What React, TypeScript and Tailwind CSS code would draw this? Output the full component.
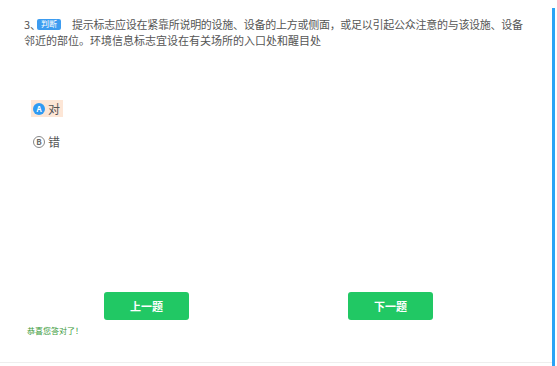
export default function App() {
  const font = { fontFamily: '"Noto Sans CJK SC", "Liberation Sans", sans-serif' };
  return (
    <div className="relative w-[557px] h-[366px] bg-white overflow-hidden" style={font}>
      {/* right scroll indicator */}
      <div className="absolute right-[2px] top-[8px] bottom-0 w-[3px] bg-[#2aa3f5]" />
      <div className="flex flex-col w-[552px] h-[363px] border-b border-[#eeeeee]">
        {/* question */}
        <div className="pl-[24px] pt-[16px] text-[11px] leading-[16px] text-[#555] whitespace-nowrap">
          <div className="flex items-center">
            <span>3、</span>
            <span className="flex items-center ml-[-4px] px-[4px] h-[11px] text-[8px] leading-none text-white bg-[#3d9cf0] rounded-[2px]">判断</span>
            <span className="ml-[11px] tracking-[-0.27px]">提示标志应设在紧靠所说明的设施、设备的上方或侧面，或足以引起公众注意的与该设施、设备</span>
          </div>
          <div>邻近的部位。环境信息标志宜设在有关场所的入口处和醒目处</div>
        </div>

        {/* options */}
        <div className="flex flex-col items-start gap-[16px] pl-[31px] mt-[52px] text-[12px] text-[#555]">
          <div className="flex items-center gap-[3px] h-[17px] pl-[2px] pr-[3px] bg-[#fde6d6]">
            <span className="flex items-center justify-center w-[12px] h-[12px] rounded-full bg-[#2f9bf3] text-white text-[8px] font-bold leading-none">A</span>
            <span>对</span>
          </div>
          <div className="flex items-center gap-[3px] h-[17px] pl-[2px] pr-[3px]">
            <span className="flex items-center justify-center w-[12px] h-[12px] rounded-full border border-[#888] text-[#666] text-[8px] font-bold leading-none">B</span>
            <span>错</span>
          </div>
        </div>

        {/* nav buttons */}
        <div className="flex mt-auto">
          <button className="ml-[104px] w-[85px] h-[28px] rounded-[3px] bg-[#21c864] text-white text-[11px] font-bold">上一题</button>
          <button className="ml-[159px] w-[85px] h-[28px] rounded-[3px] bg-[#21c864] text-white text-[11px] font-bold">下一题</button>
        </div>
        <div className="pl-[27px] mt-[5px] mb-[25px] text-[8px] leading-[12px] text-[#3a9a3a]">恭喜您答对了！</div>
      </div>
    </div>
  );
}
